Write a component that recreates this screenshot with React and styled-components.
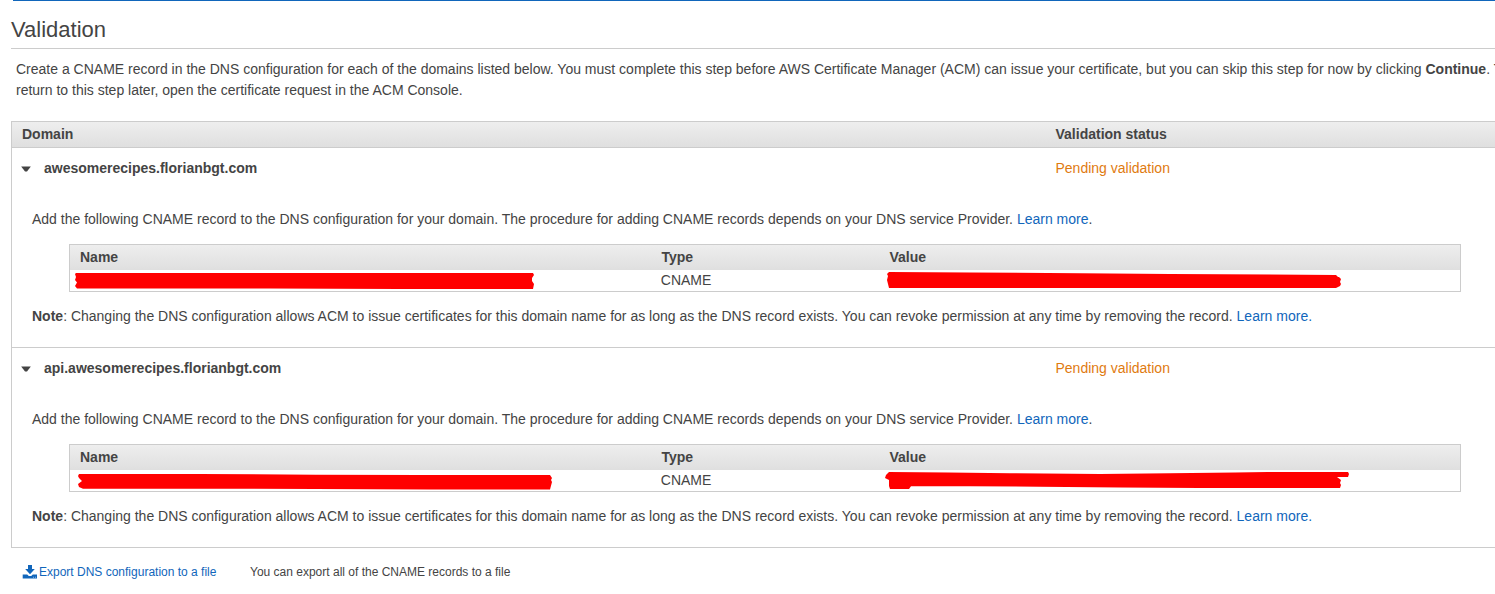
import React from "react";
import styled, { createGlobalStyle } from "styled-components";

const GlobalStyle = createGlobalStyle`
  body {
    margin: 0;
    background: #fff;
    color: #444;
    font-family: "Liberation Sans", Arial, sans-serif;
    font-size: 14px;
    line-height: 21px;
    overflow: hidden;
  }
`;

const Page = styled.main`
  width: 1495px;
  height: 594px;
  box-sizing: border-box;
  padding-left: 11px;
  overflow: hidden;
`;

const TopRule = styled.div`
  height: 1px;
  margin-left: 1.5px;
  background: #1166bb;
`;

const Heading = styled.h1`
  margin: 0;
  height: 48px;
  padding-top: 13px;
  box-sizing: border-box;
  border-bottom: 1px solid #ccc;
  font-size: 22px;
  line-height: 31px;
  font-weight: 400;
`;

const Intro = styled.p`
  margin: 10px 0 20px 5px;
  white-space: nowrap;
`;

const DomainTable = styled.section`
  border-top: 1px solid #ccc;
  border-left: 1px solid #ccc;
`;

const TableHeader = styled.div`
  display: grid;
  grid-template-columns: 1033.5px 1fr;
  height: 26px;
  padding-left: 10px;
  box-sizing: border-box;
  border-bottom: 1px solid #ccc;
  background: linear-gradient(#eee, #dfdfdf);
  font-weight: 700;
  line-height: 24px;
`;

const DomainSection = styled.article`
  height: 200px;
  box-sizing: border-box;
  padding-top: 10px;
  border-bottom: 1px solid #ccc;
`;

const DomainRow = styled.div`
  display: grid;
  grid-template-columns: 23px 1011.5px 1fr;
  align-items: center;
  padding-left: 9px;
  height: 21px;
`;

const Caret = styled.svg`
  display: block;
  width: 10px;
  height: 6px;
  margin-top: 1px;
`;

const DomainName = styled.strong``;

const Status = styled.span`
  color: #df7b10;
`;

const Text = styled.p`
  margin: ${(p) => p.$gap}px 0 0 20px;
  white-space: nowrap;
`;

const Link = styled.a`
  color: #1166bb;
  text-decoration: none;
`;

const RecordTable = styled.div`
  width: 1392px;
  height: 48px;
  box-sizing: border-box;
  margin: 14px 0 0 57px;
  border: 1px solid #ccc;
`;

const RecordHeader = styled.div`
  display: grid;
  grid-template-columns: 581.5px 228px 1fr;
  padding-left: 10px;
  height: 25px;
  background: linear-gradient(#eee, #dfdfdf);
  font-weight: 700;
  line-height: 25px;
`;

const RecordRow = styled.div`
  position: relative;
  height: 21px;
  padding-left: 590.8px;
  line-height: 21px;
`;

const Redaction = styled.svg`
  position: absolute;
  left: 0;
  top: 0;
  width: 1390px;
  height: 21px;
  fill: #f00;
`;

const Footer = styled.footer`
  display: flex;
  align-items: center;
  height: 20px;
  margin: 14px 0 0 11px;
  font-size: 12px;
  line-height: 20px;
`;

const ExportLink = styled.a`
  display: flex;
  align-items: center;
  width: 228px;
  color: #1166bb;
`;

const DownloadIcon = styled.svg`
  width: 16px;
  height: 14px;
  margin-right: 1px;
`;

const ExportHint = styled.span``;

const domains = [
  {
    name: "awesomerecipes.florianbgt.com",
    strokes: [
      "M6 3H463L464 5L462 8L462 11L464 14L463 19H330L200 18.5H7L5 16L7 12.5L5 10L6 7L5 4Z",
      "M819 2L900 2.6L1010 3.2L1100 4L1266 5H1266L1268 7H1269L1271 9L1270 12L1271 14L1270 16L1266 18H819L818 14L817 10L818 6L817 4Z",
    ],
  },
  {
    name: "api.awesomerecipes.florianbgt.com",
    strokes: [
      "M9 4H129L246 4.7L350 5H480L482 8L481 10L482 12L480 19.5H360L246 19L129 18.7H13L9 17L8 14L12 11L9 8L8 6Z",
      "M819 2L878 2.5L940 3.2L1030 4L1100 3.3L1165 2.6L1198 2H1278L1279 4L1278 7H1267L1271 10L1270 13L1271 15L1270 18H1214L1130 18L1050 17.5L970 16.8L900 16.2H841L839 19H820L819 16V10L815 8L816 5Z",
    ],
  },
];

function Domain({ domain }) {
  return (
    <DomainSection>
      <DomainRow>
        <Caret viewBox="0 0 10 6" aria-hidden="true">
          <path d="M0.2 0.5H9.8L6 5.5H4Z" fill="#444" />
        </Caret>
        <DomainName>{domain.name}</DomainName>
        <Status>Pending validation</Status>
      </DomainRow>
      <Text $gap={30}>
        Add the following CNAME record to the DNS configuration for your domain. The procedure for adding
        CNAME records depends on your DNS service Provider. <Link>Learn more</Link>.
      </Text>
      <RecordTable>
        <RecordHeader>
          <span>Name</span>
          <span>Type</span>
          <span>Value</span>
        </RecordHeader>
        <RecordRow>
          CNAME
          <Redaction viewBox="0 0 1390 21" aria-hidden="true">
            {domain.strokes.map((d) => (
              <path key={d} d={d} />
            ))}
          </Redaction>
        </RecordRow>
      </RecordTable>
      <Text $gap={14}>
        <strong>Note</strong>: Changing the DNS configuration allows ACM to issue certificates for this
        domain name for as long as the DNS record exists. You can revoke permission at any time by removing
        the record. <Link>Learn more.</Link>
      </Text>
    </DomainSection>
  );
}

export default function App() {
  return (
    <Page>
      <GlobalStyle />
      <TopRule />
      <Heading>Validation</Heading>
      <Intro>
        Create a CNAME record in the DNS configuration for each of the domains listed below. You must
        complete this step before AWS Certificate Manager (ACM) can issue your certificate, but you can skip
        this step for now by clicking <strong>Continue</strong>. To
        <br />
        return to this step later, open the certificate request in the ACM Console.
      </Intro>
      <DomainTable>
        <TableHeader>
          <span>Domain</span>
          <span>Validation status</span>
        </TableHeader>
        {domains.map((d) => (
          <Domain key={d.name} domain={d} />
        ))}
      </DomainTable>
      <Footer>
        <ExportLink>
          <DownloadIcon viewBox="0 0 16 14" aria-hidden="true">
            <path d="M6 0H10V4H12.8L8 9.2L3.2 4H6Z" fill="#1166bb" />
            <path
              d="M0.7 9.4H5.2L6.8 11H9.2L10.8 9.4H15V13.6H0.7Z"
              fill="#1166bb"
            />
            <path d="M11 11.7h1v1h-1zM13 11.7h1v1h-1z" fill="#8fb5dd" />
          </DownloadIcon>
          Export DNS configuration to a file
        </ExportLink>
        <ExportHint>You can export all of the CNAME records to a file</ExportHint>
      </Footer>
    </Page>
  );
}
